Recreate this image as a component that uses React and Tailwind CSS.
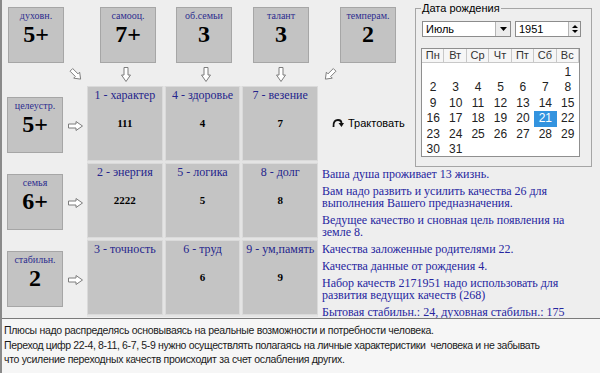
import React from "react";

const serif = "font-['Liberation_Serif','Times_New_Roman',serif]";
const sans = "font-['Liberation_Sans',Arial,sans-serif]";

function Box({ label, value }) {
  return (
    <div className="w-[56px] h-[56px] shrink-0 bg-[#c3c3c3] border border-[#a6a6a6] flex flex-col items-center pt-[1px]">
      <span className={`${serif} text-[10px] leading-[14px] text-[#2d2d8f]`}>{label}</span>
      <span className={`${serif} text-[24px] leading-[22px] font-bold text-black`}>{value}</span>
    </div>
  );
}

function ArrowRight() {
  return (
    <svg width="15" height="10" viewBox="0 0 15 10" className="shrink-0">
      <polygon points="0.5,3 8,3 8,0.5 14.5,5 8,9.5 8,7 0.5,7" fill="#fff" stroke="#7d7d7d" strokeWidth="1" />
    </svg>
  );
}

function ArrowDown() {
  return (
    <svg width="10" height="15" viewBox="0 0 10 15" className="shrink-0">
      <polygon points="3,0.5 7,0.5 7,8 9.5,8 5,14.5 0.5,8 3,8" fill="#fff" stroke="#7d7d7d" strokeWidth="1" />
    </svg>
  );
}

function ArrowDiag({ left }) {
  return (
    <svg width="16" height="15" viewBox="0 0 16 16" className="shrink-0">
      <g transform={left ? "rotate(135 8 8)" : "rotate(45 8 8)"}>
        <polygon points="1,6 9,6 9,3.5 15,8 9,12.5 9,10 1,10" fill="#fff" stroke="#7d7d7d" strokeWidth="1" />
      </g>
    </svg>
  );
}

const cells = [
  ["1 - характер", "111"],
  ["4 - здоровье", "4"],
  ["7 - везение", "7"],
  ["2 - энергия", "2222"],
  ["5 - логика", "5"],
  ["8 - долг", "8"],
  ["3 - точность", ""],
  ["6 - труд", "6"],
  ["9 - ум,память", "9"],
];

const leftBoxes = [
  ["целеустр.", "5+"],
  ["семья", "6+"],
  ["стабильн.", "2"],
];

const days = [
  ["", "", "", "", "", "", "1"],
  ["2", "3", "4", "5", "6", "7", "8"],
  ["9", "10", "11", "12", "13", "14", "15"],
  ["16", "17", "18", "19", "20", "21", "22"],
  ["23", "24", "25", "26", "27", "28", "29"],
  ["30", "31", "", "", "", "", ""],
];

const heads = ["Пн", "Вт", "Ср", "Чт", "Пт", "Сб", "Вс"];

const lines = [
  ["Ваша душа проживает 13 жизнь."],
  ["Вам надо развить и усилить качества 26 для", "выполнения Вашего предназначения."],
  ["Ведущее качество и сновная цель появления на", "земле 8."],
  ["Качества заложенные родителями 22."],
  ["Качества данные от рождения 4."],
  ["Набор качеств 2171951 надо использовать для", "развития ведущих качеств (268)"],
  ["Бытовая стабильн.: 24, духовная стабильн.: 175"],
];

export default function App() {
  return (
    <div className="w-[600px] h-[373px] bg-[#eeeeee] border-l-2 border-[#8a8a8a] flex flex-col overflow-hidden">
      <div className="h-[318px] flex">
        {/* left block */}
        <div className="w-[318px] shrink-0 flex flex-col">
          <div className="h-[63px] pt-[7px] flex">
            <div className="ml-[6px]"><Box label="духовн." value="5+" /></div>
            <div className="ml-[36px]"><Box label="самооц." value="7+" /></div>
            <div className="ml-[20px]"><Box label="об.семьи" value="3" /></div>
            <div className="ml-[21px]"><Box label="талант" value="3" /></div>
          </div>
          <div className="h-[23px] flex items-start pt-[4px]">
            <div className="ml-[66px]"><ArrowDiag /></div>
            <div className="ml-[37px]"><ArrowDown /></div>
            <div className="ml-[70px]"><ArrowDown /></div>
            <div className="ml-[65px]"><ArrowDown /></div>
          </div>
          <div className="flex">
            <div className="w-[85px] shrink-0 grid grid-rows-[77px_77px_77px]">
              {leftBoxes.map(([l, v]) => (
                <div key={l} className="flex items-center pl-[5px]">
                  <Box label={l} value={v} />
                  <div className="ml-[5px] mt-[2px]"><ArrowRight /></div>
                </div>
              ))}
            </div>
            <div className="w-[231px] grid grid-cols-3 grid-rows-[75px_75px_75px] gap-[2px] bg-[#e4e4e4]">
              {cells.map(([l, v]) => (
                <div key={l} className="bg-[#c4c4c4] border border-[#dadada] flex flex-col items-center">
                  <span className={`${serif} text-[12px] leading-[14px] mt-[1px] text-[#25258c] whitespace-nowrap`}>{l}</span>
                  <span className={`${serif} text-[11px] leading-[14px] mt-[14px] font-bold text-black`}>{v}</span>
                </div>
              ))}
            </div>
          </div>
        </div>
        {/* right block */}
        <div className="flex-1 flex flex-col">
          <div className="h-[168px] flex">
            <div className="w-[95px] shrink-0 flex flex-col">
              <div className="h-[63px] pt-[7px] pl-[20px]">
                <Box label="темперам." value="2" />
              </div>
              <div className="h-[23px] pt-[4px] pl-[2px]">
                <ArrowDiag left />
              </div>
              <div className="mt-[30px] h-[14px] flex items-center pl-[12px]">
                <svg width="12" height="10" viewBox="0 0 12 10" className="shrink-0">
                  <path d="M1.5 9 C1 3.5 3.5 2 6 2 C8.5 2 9.5 3.5 9.5 5.5" fill="none" stroke="#111" strokeWidth="1.8" />
                  <polygon points="6.5,5 12,5 9.5,9" fill="#111" />
                </svg>
                <span className={`${sans} text-[11px] leading-[14px] ml-[4px] text-black`}>Трактовать</span>
              </div>
            </div>
            <div className="mt-[8px] w-[177px] h-[159px] border border-[#a5a5a5] relative pt-[12px] pl-[6px]">
              <span className={`${sans} absolute -top-[8px] left-[5px] bg-[#eeeeee] px-[1px] text-[11px] leading-[14px] text-black`}>
                Дата рождения
              </span>
              <div className="flex gap-[4px]">
                <div className="w-[89px] h-[16px] bg-white border border-[#8c8c8c] flex items-center justify-between">
                  <span className={`${sans} text-[11px] leading-[14px] pl-[3px] text-black`}>Июль</span>
                  <div className="w-[15px] h-[14px] bg-[#ececec] border-l border-[#b5b5b5] flex items-center justify-center">
                    <svg width="7" height="4" viewBox="0 0 7 4"><polygon points="0,0 7,0 3.5,4" fill="#000" /></svg>
                  </div>
                </div>
                <div className="w-[66px] h-[16px] bg-white border border-[#8c8c8c] flex items-center justify-between">
                  <span className={`${sans} text-[11px] leading-[14px] pl-[3px] text-black`}>1951</span>
                  <div className="w-[12px] h-[14px] bg-[#ececec] border-l border-[#b5b5b5] flex flex-col items-center justify-center gap-[2px]">
                    <svg width="6" height="3" viewBox="0 0 6 3"><polygon points="0,3 6,3 3,0" fill="#000" /></svg>
                    <svg width="6" height="3" viewBox="0 0 6 3"><polygon points="0,0 6,0 3,3" fill="#000" /></svg>
                  </div>
                </div>
              </div>
              <div className="mt-[11px] -ml-[1px] w-[159px] h-[109px] bg-white border border-[#8f8f8f] flex flex-col">
                <div className="grid grid-cols-7 h-[14px] border-b border-[#c8c8c8] bg-[#f6f6f6]">
                  {heads.map((h) => (
                    <div key={h} className={`${sans} text-[11px] leading-[13px] text-center text-[#333] border-r border-[#c8c8c8]`}>{h}</div>
                  ))}
                </div>
                <div className="pt-[2px] flex flex-col">
                  {days.map((row, i) => (
                    <div key={i} className="grid grid-cols-7 h-[15.4px]">
                      {row.map((d, j) => (
                        <div
                          key={j}
                          className={`${sans} text-[12px] leading-[15.4px] text-center ${d === "21" ? "bg-[#3393df] text-white" : "text-[#222]"}`}
                        >
                          {d}
                        </div>
                      ))}
                    </div>
                  ))}
                </div>
              </div>
            </div>
          </div>
          <div className="pl-[2px] pt-[1px] flex flex-col">
            {lines.map((p, i) => (
              <p key={i} className={`${serif} mb-[5px] text-[12px] leading-[12px] text-[#2626a0] whitespace-nowrap`}>
                {p[0]}
                {p[1] && (
                  <>
                    <br />
                    {p[1]}
                  </>
                )}
              </p>
            ))}
          </div>
        </div>
      </div>
      <div className="flex-1 border-t border-[#7a7a7a] bg-[#f6f6f6] pt-[4px] pl-[2px]">
        <p className={`${sans} text-[10.5px] tracking-[-0.3px] leading-[14.5px] text-[#1a1a1a] whitespace-nowrap`}>
          Плюсы надо распределясь основываясь на реальные возможности и потребности человека.
        </p>
        <p className={`${sans} text-[10.5px] tracking-[-0.35px] leading-[14.5px] text-[#1a1a1a] whitespace-nowrap`}>
          Переход цифр 22-4, 8-11, 6-7, 5-9 нужно осуществлять полагаясь на личные характеристики&nbsp; человека и не забывать
        </p>
        <p className={`${sans} text-[10.5px] tracking-[-0.3px] leading-[14.5px] text-[#1a1a1a] whitespace-nowrap`}>
          что усиление переходных качеств происходит за счет ослабления других.
        </p>
      </div>
    </div>
  );
}
